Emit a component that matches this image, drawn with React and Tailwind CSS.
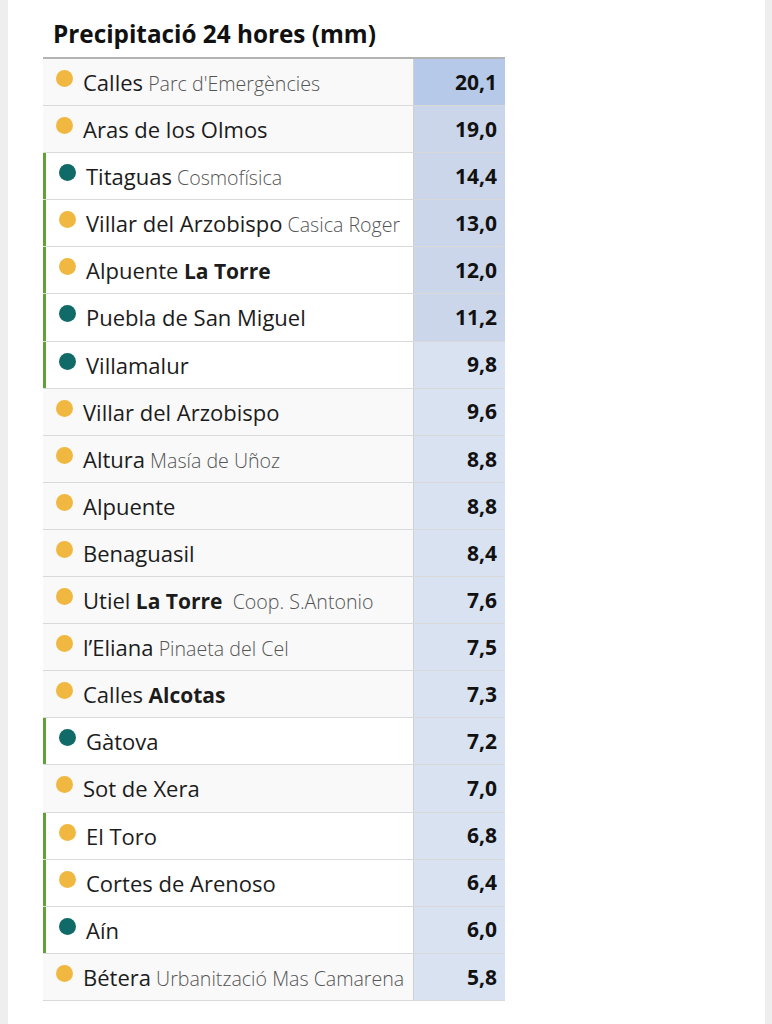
import React from "react";

const rows = [
  { dot: "y", name: "Calles", sub: "Parc d'Emergències", val: "20,1", tone: "top" },
  { dot: "y", name: "Aras de los Olmos", val: "19,0", tone: "mid" },
  { dot: "t", green: true, name: "Titaguas", sub: "Cosmofísica", val: "14,4", tone: "mid" },
  { dot: "y", green: true, name: "Villar del Arzobispo", sub: "Casica Roger", val: "13,0", tone: "mid" },
  { dot: "y", green: true, name: "Alpuente", strong: "La Torre", val: "12,0", tone: "mid" },
  { dot: "t", green: true, name: "Puebla de San Miguel", val: "11,2", tone: "mid" },
  { dot: "t", green: true, name: "Villamalur", val: "9,8" },
  { dot: "y", name: "Villar del Arzobispo", val: "9,6" },
  { dot: "y", name: "Altura", sub: "Masía de Uñoz", val: "8,8" },
  { dot: "y", name: "Alpuente", val: "8,8" },
  { dot: "y", name: "Benaguasil", val: "8,4" },
  { dot: "y", name: "Utiel", strong: "La Torre", sub: "Coop. S.Antonio", val: "7,6" },
  { dot: "y", name: "l’Eliana", sub: "Pinaeta del Cel", val: "7,5" },
  { dot: "y", name: "Calles", strong: "Alcotas", val: "7,3" },
  { dot: "t", green: true, name: "Gàtova", val: "7,2" },
  { dot: "y", name: "Sot de Xera", val: "7,0" },
  { dot: "y", green: true, name: "El Toro", val: "6,8" },
  { dot: "y", green: true, name: "Cortes de Arenoso", val: "6,4" },
  { dot: "t", green: true, name: "Aín", val: "6,0" },
  { dot: "y", name: "Bétera", sub: "Urbanització Mas Camarena", val: "5,8" },
];

const Row = ({ r }) => {
  const valBg =
    r.tone === "top" ? "bg-[#b6c9e8]" : r.tone === "mid" ? "bg-[#cbd6ea]" : "bg-[#d9e2f1]";
  return (
    <div className="flex h-[47.1px] border-b border-[#d9d9d9]">
      <div
        className={`flex-1 flex items-start ${
          r.green ? "border-l-[3px] border-[#5fa336] bg-white" : "bg-[#f9f9f9]"
        }`}
      >
        <span
          className={`mt-[11px] ml-[13px] w-[17px] h-[17px] rounded-full shrink-0 ${
            r.dot === "t" ? "bg-[#0f6a68]" : "bg-[#f0b840]"
          }`}
        />
        <div className="ml-[10px] mt-[8px] text-[22px] leading-[30px] text-[#1c1c1c] whitespace-nowrap">
          {r.name}
          {r.strong && <span className="font-bold text-[21px]"> {r.strong}</span>}
          {r.sub && (
            <span className="font-light text-[19.6px] text-[#555]">
              {r.strong ? "\u00a0 " : " "}
              {r.sub}
            </span>
          )}
        </div>
      </div>
      <div
        className={`w-[92px] border-l border-[#d0d0d0] flex items-center justify-end pr-[8px] pt-[1px] text-[21px] font-bold text-[#111] ${valBg}`}
      >
        {r.val}
      </div>
    </div>
  );
};

export default function App() {
  return (
    <div className="min-h-screen bg-[#eeeeee] flex font-['Open_Sans',sans-serif]">
      <div className="ml-[8px] w-[757px] bg-white pb-[24px]">
        <h1 className="pl-[45px] pt-[17px] h-[57px] text-[24.3px] leading-[33px] font-bold text-[#111]">
          Precipitació 24 hores (mm)
        </h1>
        <div className="ml-[35px] w-[462px] border-t-2 border-[#b3b3b3]">
          {rows.map((r, i) => (
            <Row key={i} r={r} />
          ))}
        </div>
      </div>
    </div>
  );
}
